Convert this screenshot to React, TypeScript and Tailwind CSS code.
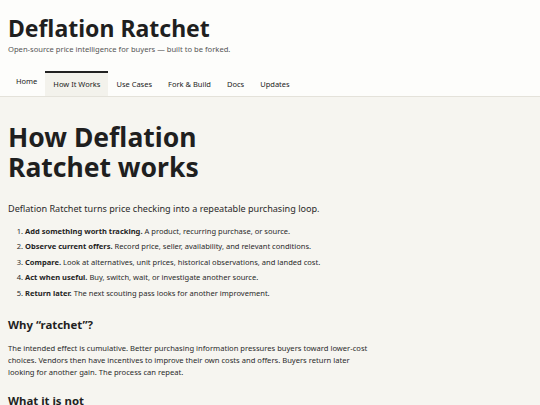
const tabs = ["Home", "How It Works", "Use Cases", "Fork & Build", "Docs", "Updates"];

const steps = [
  { title: "Add something worth tracking.", text: "A product, recurring purchase, or source." },
  { title: "Observe current offers.", text: "Record price, seller, availability, and relevant conditions." },
  { title: "Compare.", text: "Look at alternatives, unit prices, historical observations, and landed cost." },
  { title: "Act when useful.", text: "Buy, switch, wait, or investigate another source." },
  { title: "Return later.", text: "The next scouting pass looks for another improvement." },
];

export default function App() {
  return (
    <div className="min-h-screen bg-[#f6f5f0] text-[#222] font-['Noto_Sans',sans-serif]">
      {/* Header */}
      <header className="bg-[#fdfdfb] border-b border-[#e4e2da]">
        <div className="px-2 pt-[14px]">
          <h1 className="text-[23px] font-bold leading-[28px] text-[#1f1f1f]">Deflation Ratchet</h1>
          <p className="text-[7.6px] leading-[12px] text-[#555] mt-px">
            Open-source price intelligence for buyers — built to be forked.
          </p>
        </div>
        <nav className="flex items-end px-2 mt-[16px] text-[7.5px] leading-[12px] text-[#222]">
          {tabs.map((tab) =>
            tab === "How It Works" ? (
              <span key={tab} className="px-[8px] pt-[5px] pb-[6px] bg-[#f3f2ec] border-t-2 border-[#222]">
                {tab}
              </span>
            ) : tab === "Home" ? (
              <span key={tab} className="px-[8px] pt-[4px] pb-[9px]">
                {tab}
              </span>
            ) : (
              <span key={tab} className="px-[8px] pt-[7px] pb-[6px]">
                {tab}
              </span>
            )
          )}
        </nav>
      </header>

      {/* Main */}
      <main className="px-2 pt-[25px]">
        <h2 className="text-[26.5px] font-bold leading-[30px] text-[#1f1f1f] max-w-[240px]">
          How Deflation Ratchet works
        </h2>
        <p className="mt-[20px] text-[9.1px] leading-[13px] text-[#2a2a2a]">
          Deflation Ratchet turns price checking into a repeatable purchasing loop.
        </p>
        <ol className="mt-[9.5px] pl-[17px] list-decimal text-[7.55px] leading-[12px] text-[#2a2a2a] space-y-[3.5px]">
          {steps.map((s) => (
            <li key={s.title}>
              <strong className="font-bold text-[#1f1f1f]">{s.title}</strong> {s.text}
            </li>
          ))}
        </ol>
        <h3 className="mt-[18px] text-[11.4px] font-bold leading-[16px] text-[#1f1f1f]">Why “ratchet”?</h3>
        <p className="mt-[9px] text-[7.6px] leading-[12px] text-[#2a2a2a] max-w-[368px]">
          The intended effect is cumulative. Better purchasing information pressures buyers toward lower-cost
          choices. Vendors then have incentives to improve their own costs and offers. Buyers return later
          looking for another gain. The process can repeat.
        </p>
        <h3 className="mt-[15px] text-[11.4px] font-bold leading-[16px] text-[#1f1f1f]">What it is not</h3>
      </main>
    </div>
  );
}
